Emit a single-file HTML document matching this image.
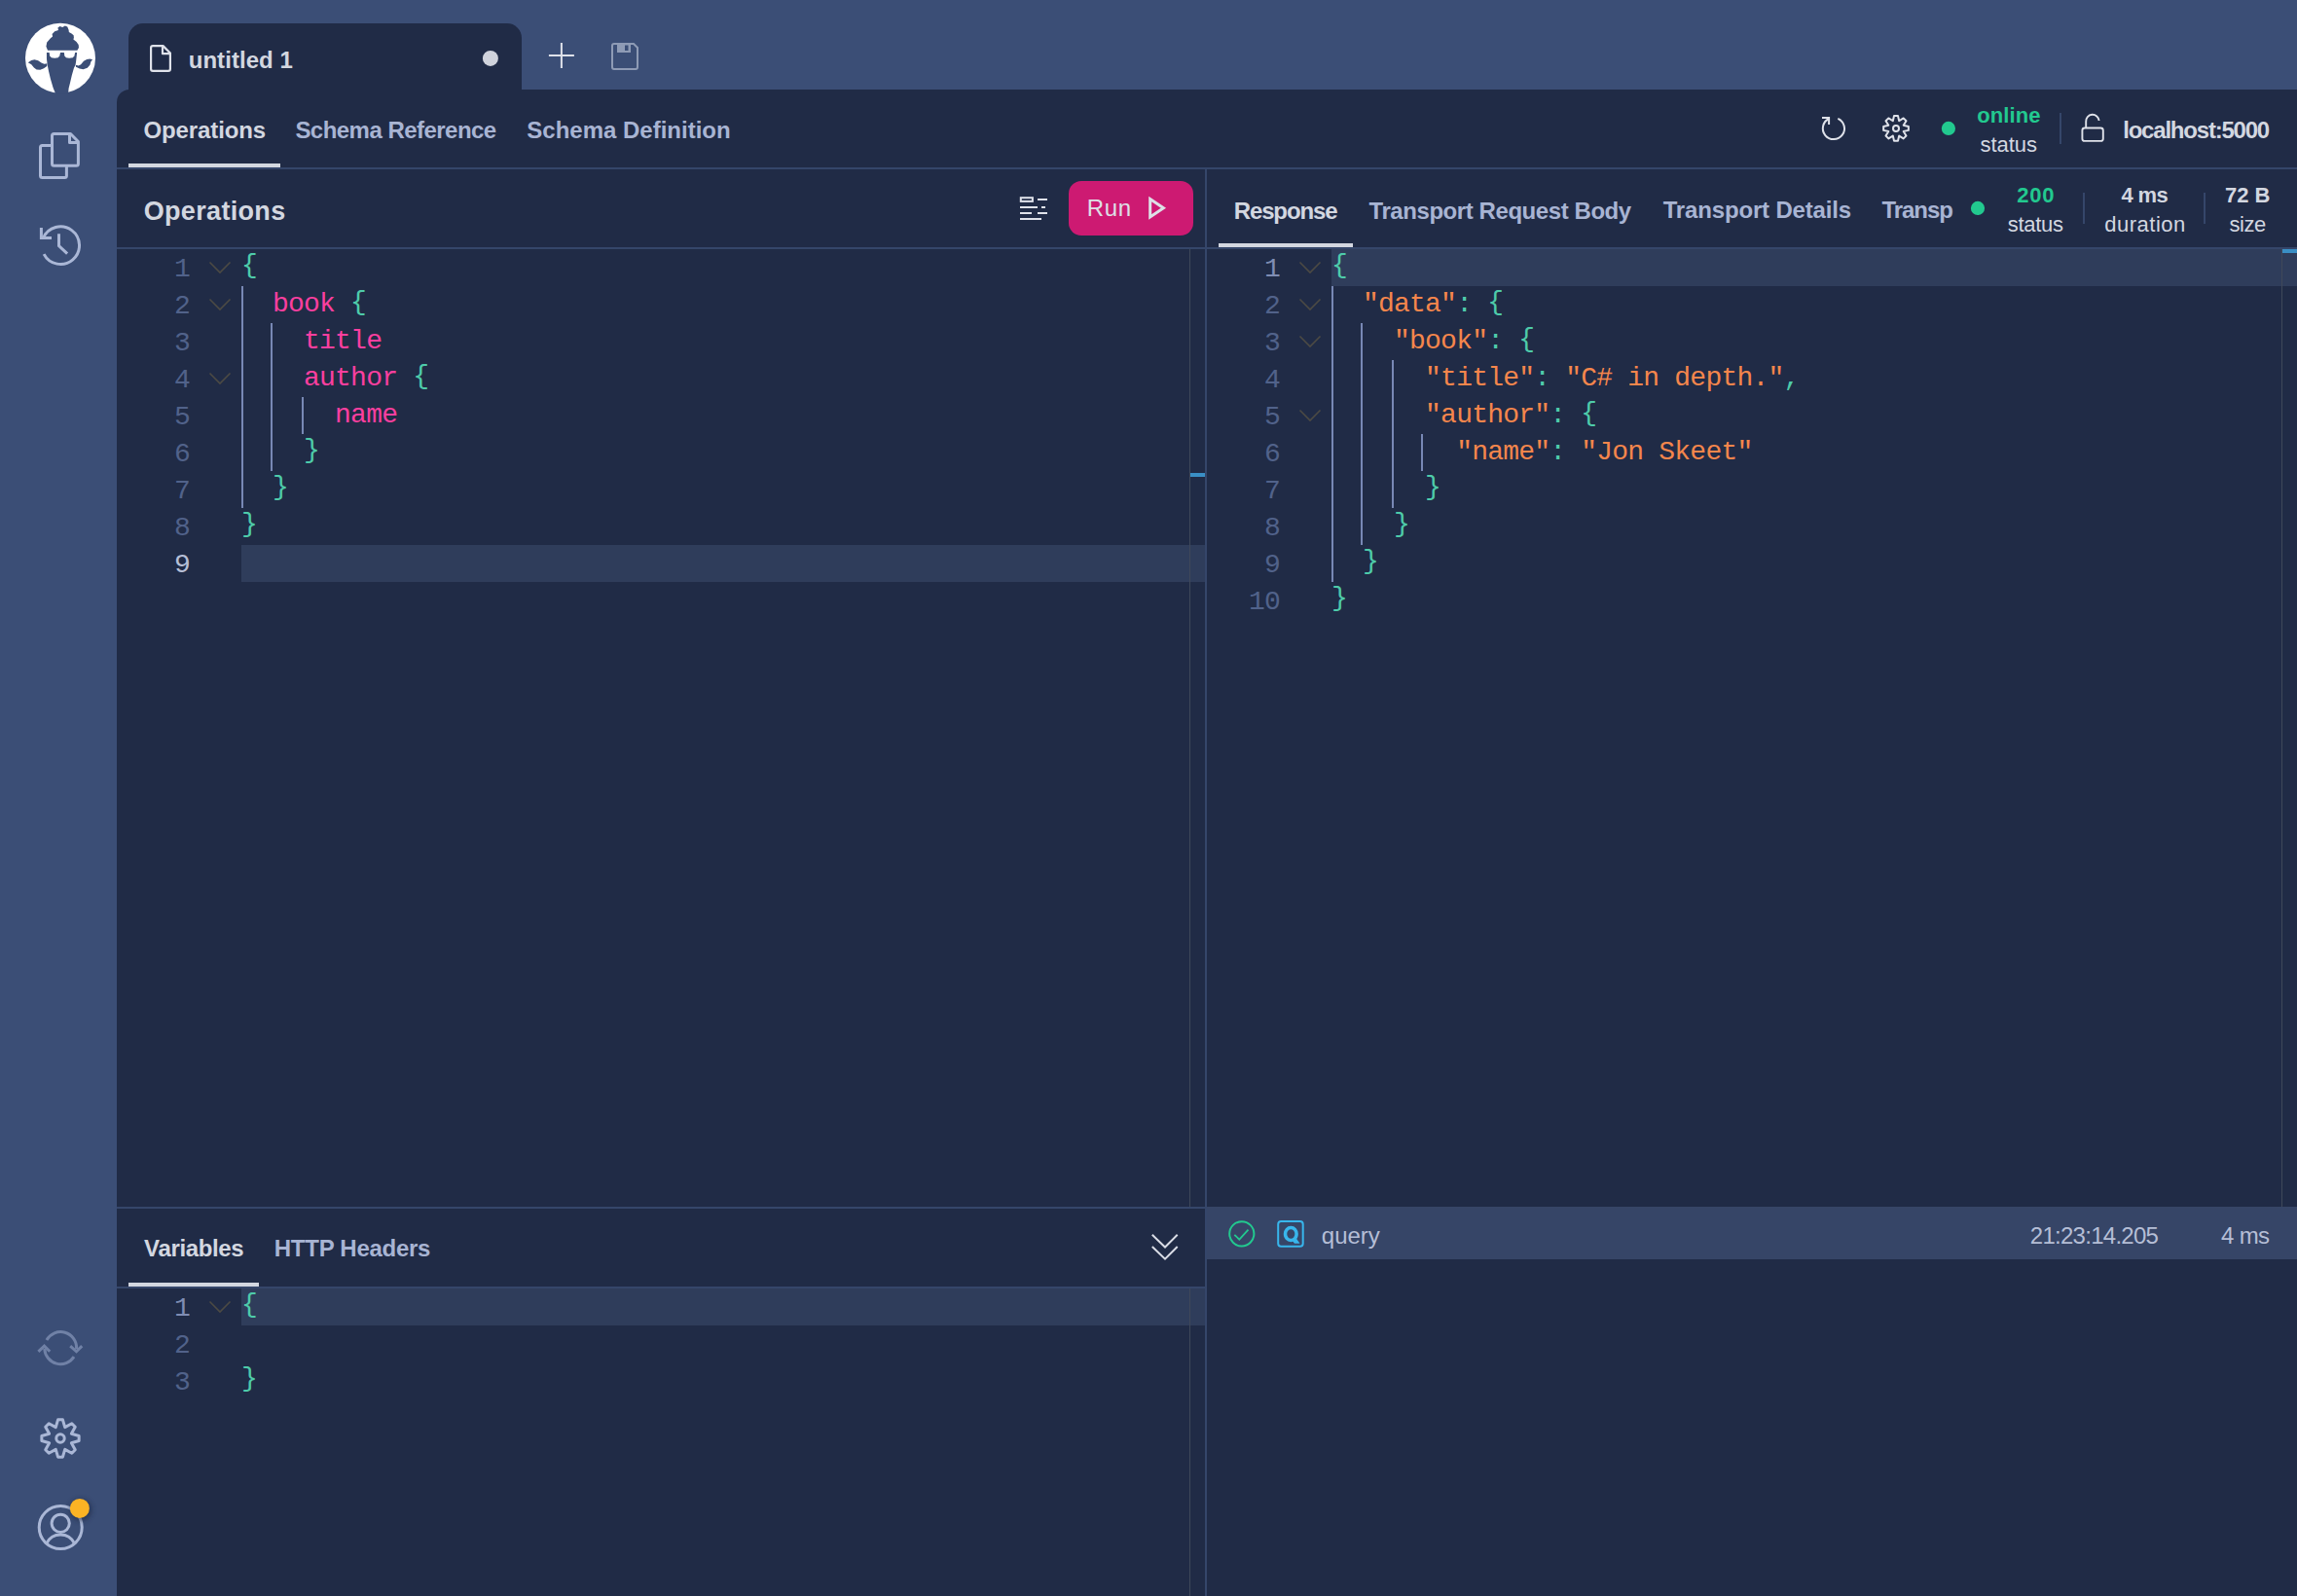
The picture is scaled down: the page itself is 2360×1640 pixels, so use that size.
<!DOCTYPE html><html><head><meta charset='utf-8'><style>
*{margin:0;padding:0;box-sizing:border-box}
html,body{width:2360px;height:1640px;overflow:hidden;background:#3b4e76}
body{position:relative;font-family:"Liberation Sans",sans-serif}
.t{position:absolute;white-space:pre;line-height:60px;font-family:"Liberation Sans",sans-serif}
.code{position:absolute;white-space:pre;font-family:"Liberation Mono",monospace;font-size:28px;letter-spacing:-0.8px;line-height:38px;height:38px}
.ln{position:absolute;width:200px;text-align:right;white-space:pre;font-family:"Liberation Mono",monospace;font-size:28px;letter-spacing:-0.8px;line-height:38px}
svg{position:absolute;overflow:visible}
.br{position:relative;top:-2px}
</style></head><body>
<div style='position:absolute;left:0px;top:0px;width:2360px;height:1640px;background:#3b4e76;'></div>
<div style='position:absolute;left:132px;top:24px;width:404px;height:80px;background:#202b46;border-radius:15px 15px 0 0'></div>
<div style='position:absolute;left:120px;top:92px;width:2240px;height:1548px;background:#202b46;border-top-left-radius:13px'></div>
<div style='position:absolute;left:120px;top:172px;width:2240px;height:2px;background:#35466a;'></div>
<div style='position:absolute;left:120px;top:254px;width:2240px;height:2px;background:#35466a;'></div>
<div style='position:absolute;left:1238px;top:174px;width:2px;height:1466px;background:#35466a;'></div>
<div style='position:absolute;left:120px;top:1240px;width:1118px;height:2px;background:#35466a;'></div>
<div style='position:absolute;left:120px;top:1322px;width:1118px;height:2px;background:#35466a;'></div>
<div style='position:absolute;left:132px;top:168px;width:156px;height:4px;background:#d3d7e0;'></div>
<div style='position:absolute;left:1252px;top:250px;width:138px;height:4px;background:#d3d7e0;'></div>
<div style='position:absolute;left:132px;top:1318px;width:134px;height:4px;background:#d3d7e0;'></div>
<div style='position:absolute;left:248px;top:560px;width:990px;height:38px;background:#2f3d5b;'></div>
<div style='position:absolute;left:1368px;top:256px;width:992px;height:38px;background:#2f3d5b;'></div>
<div style='position:absolute;left:248px;top:1324px;width:990px;height:38px;background:#2f3d5b;'></div>
<div style='position:absolute;left:1240px;top:1240px;width:1120px;height:54px;background:#364567;'></div>
<div style='position:absolute;left:1222px;top:256px;width:1px;height:984px;background:#3f4859;'></div>
<div style='position:absolute;left:1222px;top:1324px;width:1px;height:316px;background:#3f4859;'></div>
<div style='position:absolute;left:2344px;top:256px;width:1px;height:984px;background:#3f4859;'></div>
<div style='position:absolute;left:1223px;top:486px;width:15px;height:4px;background:#3a8fc5;'></div>
<div style='position:absolute;left:2345px;top:256px;width:15px;height:4px;background:#3a8fc5;'></div>
<div style='position:absolute;left:2116px;top:116px;width:2px;height:32px;background:#35466a;'></div>
<div style='position:absolute;left:2140px;top:198px;width:2px;height:32px;background:#35466a;'></div>
<div style='position:absolute;left:2264px;top:198px;width:2px;height:32px;background:#35466a;'></div>
<div style='position:absolute;left:1098px;top:186px;width:128px;height:56px;background:#cd1a72;border-radius:13px'></div>
<div style='position:absolute;left:248px;top:294px;width:2px;height:228px;background:#7888b5;'></div>
<div style='position:absolute;left:278px;top:332px;width:2px;height:152px;background:#7888b5;'></div>
<div style='position:absolute;left:310px;top:408px;width:2px;height:38px;background:#7888b5;'></div>
<div style='position:absolute;left:1368px;top:294px;width:2px;height:304px;background:#7888b5;'></div>
<div style='position:absolute;left:1398px;top:332px;width:2px;height:228px;background:#7888b5;'></div>
<div style='position:absolute;left:1430px;top:370px;width:2px;height:152px;background:#7888b5;'></div>
<div style='position:absolute;left:1460px;top:446px;width:2px;height:38px;background:#7888b5;'></div>
<div class=ln style='left:-5px;top:258px;color:#51628a'>1</div>
<svg style='position:absolute;left:214px;top:265px' width=24 height=16><path d='M1.5 4.5 L12 15 L22.5 4.5' fill='none' stroke='#4c4a44' stroke-width=1.6 /></svg>
<div class=code style='left:248px;top:256px'><span class=br style='color:#4ecbaa'>{</span></div>
<div class=ln style='left:-5px;top:296px;color:#51628a'>2</div>
<svg style='position:absolute;left:214px;top:303px' width=24 height=16><path d='M1.5 4.5 L12 15 L22.5 4.5' fill='none' stroke='#4c4a44' stroke-width=1.6 /></svg>
<div class=code style='left:248px;top:294px'><span style='color:#4ecbaa'> </span><span style='color:#4ecbaa'> </span><span style='color:#fb3f9f'>b</span><span style='color:#fb3f9f'>o</span><span style='color:#fb3f9f'>o</span><span style='color:#fb3f9f'>k</span><span style='color:#4ecbaa'> </span><span class=br style='color:#4ecbaa'>{</span></div>
<div class=ln style='left:-5px;top:334px;color:#51628a'>3</div>
<div class=code style='left:248px;top:332px'><span style='color:#4ecbaa'> </span><span style='color:#4ecbaa'> </span><span style='color:#4ecbaa'> </span><span style='color:#4ecbaa'> </span><span style='color:#fb3f9f'>t</span><span style='color:#fb3f9f'>i</span><span style='color:#fb3f9f'>t</span><span style='color:#fb3f9f'>l</span><span style='color:#fb3f9f'>e</span></div>
<div class=ln style='left:-5px;top:372px;color:#51628a'>4</div>
<svg style='position:absolute;left:214px;top:379px' width=24 height=16><path d='M1.5 4.5 L12 15 L22.5 4.5' fill='none' stroke='#4c4a44' stroke-width=1.6 /></svg>
<div class=code style='left:248px;top:370px'><span style='color:#4ecbaa'> </span><span style='color:#4ecbaa'> </span><span style='color:#4ecbaa'> </span><span style='color:#4ecbaa'> </span><span style='color:#fb3f9f'>a</span><span style='color:#fb3f9f'>u</span><span style='color:#fb3f9f'>t</span><span style='color:#fb3f9f'>h</span><span style='color:#fb3f9f'>o</span><span style='color:#fb3f9f'>r</span><span style='color:#4ecbaa'> </span><span class=br style='color:#4ecbaa'>{</span></div>
<div class=ln style='left:-5px;top:410px;color:#51628a'>5</div>
<div class=code style='left:248px;top:408px'><span style='color:#4ecbaa'> </span><span style='color:#4ecbaa'> </span><span style='color:#4ecbaa'> </span><span style='color:#4ecbaa'> </span><span style='color:#4ecbaa'> </span><span style='color:#4ecbaa'> </span><span style='color:#fb3f9f'>n</span><span style='color:#fb3f9f'>a</span><span style='color:#fb3f9f'>m</span><span style='color:#fb3f9f'>e</span></div>
<div class=ln style='left:-5px;top:448px;color:#51628a'>6</div>
<div class=code style='left:248px;top:446px'><span style='color:#4ecbaa'> </span><span style='color:#4ecbaa'> </span><span style='color:#4ecbaa'> </span><span style='color:#4ecbaa'> </span><span class=br style='color:#4ecbaa'>}</span></div>
<div class=ln style='left:-5px;top:486px;color:#51628a'>7</div>
<div class=code style='left:248px;top:484px'><span style='color:#4ecbaa'> </span><span style='color:#4ecbaa'> </span><span class=br style='color:#4ecbaa'>}</span></div>
<div class=ln style='left:-5px;top:524px;color:#51628a'>8</div>
<div class=code style='left:248px;top:522px'><span class=br style='color:#4ecbaa'>}</span></div>
<div class=ln style='left:-5px;top:562px;color:#b6bfd6'>9</div>
<div class=code style='left:248px;top:560px'></div>
<div class=ln style='left:1115px;top:258px;color:#7f8db3'>1</div>
<svg style='position:absolute;left:1334px;top:265px' width=24 height=16><path d='M1.5 4.5 L12 15 L22.5 4.5' fill='none' stroke='#4c4a44' stroke-width=1.6 /></svg>
<div class=code style='left:1368px;top:256px'><span class=br style='color:#4ecbaa'>{</span></div>
<div class=ln style='left:1115px;top:296px;color:#51628a'>2</div>
<svg style='position:absolute;left:1334px;top:303px' width=24 height=16><path d='M1.5 4.5 L12 15 L22.5 4.5' fill='none' stroke='#4c4a44' stroke-width=1.6 /></svg>
<div class=code style='left:1368px;top:294px'><span style='color:#4ecbaa'> </span><span style='color:#4ecbaa'> </span><span style='color:#f5864c'>&quot;</span><span style='color:#f5864c'>d</span><span style='color:#f5864c'>a</span><span style='color:#f5864c'>t</span><span style='color:#f5864c'>a</span><span style='color:#f5864c'>&quot;</span><span style='color:#4ecbaa'>:</span><span style='color:#4ecbaa'> </span><span class=br style='color:#4ecbaa'>{</span></div>
<div class=ln style='left:1115px;top:334px;color:#51628a'>3</div>
<svg style='position:absolute;left:1334px;top:341px' width=24 height=16><path d='M1.5 4.5 L12 15 L22.5 4.5' fill='none' stroke='#4c4a44' stroke-width=1.6 /></svg>
<div class=code style='left:1368px;top:332px'><span style='color:#4ecbaa'> </span><span style='color:#4ecbaa'> </span><span style='color:#4ecbaa'> </span><span style='color:#4ecbaa'> </span><span style='color:#f5864c'>&quot;</span><span style='color:#f5864c'>b</span><span style='color:#f5864c'>o</span><span style='color:#f5864c'>o</span><span style='color:#f5864c'>k</span><span style='color:#f5864c'>&quot;</span><span style='color:#4ecbaa'>:</span><span style='color:#4ecbaa'> </span><span class=br style='color:#4ecbaa'>{</span></div>
<div class=ln style='left:1115px;top:372px;color:#51628a'>4</div>
<div class=code style='left:1368px;top:370px'><span style='color:#4ecbaa'> </span><span style='color:#4ecbaa'> </span><span style='color:#4ecbaa'> </span><span style='color:#4ecbaa'> </span><span style='color:#4ecbaa'> </span><span style='color:#4ecbaa'> </span><span style='color:#f5864c'>&quot;</span><span style='color:#f5864c'>t</span><span style='color:#f5864c'>i</span><span style='color:#f5864c'>t</span><span style='color:#f5864c'>l</span><span style='color:#f5864c'>e</span><span style='color:#f5864c'>&quot;</span><span style='color:#4ecbaa'>:</span><span style='color:#4ecbaa'> </span><span style='color:#f5864c'>&quot;</span><span style='color:#f5864c'>C</span><span style='color:#f5864c'>#</span><span style='color:#f5864c'> </span><span style='color:#f5864c'>i</span><span style='color:#f5864c'>n</span><span style='color:#f5864c'> </span><span style='color:#f5864c'>d</span><span style='color:#f5864c'>e</span><span style='color:#f5864c'>p</span><span style='color:#f5864c'>t</span><span style='color:#f5864c'>h</span><span style='color:#f5864c'>.</span><span style='color:#f5864c'>&quot;</span><span style='color:#4ecbaa'>,</span></div>
<div class=ln style='left:1115px;top:410px;color:#51628a'>5</div>
<svg style='position:absolute;left:1334px;top:417px' width=24 height=16><path d='M1.5 4.5 L12 15 L22.5 4.5' fill='none' stroke='#4c4a44' stroke-width=1.6 /></svg>
<div class=code style='left:1368px;top:408px'><span style='color:#4ecbaa'> </span><span style='color:#4ecbaa'> </span><span style='color:#4ecbaa'> </span><span style='color:#4ecbaa'> </span><span style='color:#4ecbaa'> </span><span style='color:#4ecbaa'> </span><span style='color:#f5864c'>&quot;</span><span style='color:#f5864c'>a</span><span style='color:#f5864c'>u</span><span style='color:#f5864c'>t</span><span style='color:#f5864c'>h</span><span style='color:#f5864c'>o</span><span style='color:#f5864c'>r</span><span style='color:#f5864c'>&quot;</span><span style='color:#4ecbaa'>:</span><span style='color:#4ecbaa'> </span><span class=br style='color:#4ecbaa'>{</span></div>
<div class=ln style='left:1115px;top:448px;color:#51628a'>6</div>
<div class=code style='left:1368px;top:446px'><span style='color:#4ecbaa'> </span><span style='color:#4ecbaa'> </span><span style='color:#4ecbaa'> </span><span style='color:#4ecbaa'> </span><span style='color:#4ecbaa'> </span><span style='color:#4ecbaa'> </span><span style='color:#4ecbaa'> </span><span style='color:#4ecbaa'> </span><span style='color:#f5864c'>&quot;</span><span style='color:#f5864c'>n</span><span style='color:#f5864c'>a</span><span style='color:#f5864c'>m</span><span style='color:#f5864c'>e</span><span style='color:#f5864c'>&quot;</span><span style='color:#4ecbaa'>:</span><span style='color:#4ecbaa'> </span><span style='color:#f5864c'>&quot;</span><span style='color:#f5864c'>J</span><span style='color:#f5864c'>o</span><span style='color:#f5864c'>n</span><span style='color:#f5864c'> </span><span style='color:#f5864c'>S</span><span style='color:#f5864c'>k</span><span style='color:#f5864c'>e</span><span style='color:#f5864c'>e</span><span style='color:#f5864c'>t</span><span style='color:#f5864c'>&quot;</span></div>
<div class=ln style='left:1115px;top:486px;color:#51628a'>7</div>
<div class=code style='left:1368px;top:484px'><span style='color:#4ecbaa'> </span><span style='color:#4ecbaa'> </span><span style='color:#4ecbaa'> </span><span style='color:#4ecbaa'> </span><span style='color:#4ecbaa'> </span><span style='color:#4ecbaa'> </span><span class=br style='color:#4ecbaa'>}</span></div>
<div class=ln style='left:1115px;top:524px;color:#51628a'>8</div>
<div class=code style='left:1368px;top:522px'><span style='color:#4ecbaa'> </span><span style='color:#4ecbaa'> </span><span style='color:#4ecbaa'> </span><span style='color:#4ecbaa'> </span><span class=br style='color:#4ecbaa'>}</span></div>
<div class=ln style='left:1115px;top:562px;color:#51628a'>9</div>
<div class=code style='left:1368px;top:560px'><span style='color:#4ecbaa'> </span><span style='color:#4ecbaa'> </span><span class=br style='color:#4ecbaa'>}</span></div>
<div class=ln style='left:1115px;top:600px;color:#51628a'>10</div>
<div class=code style='left:1368px;top:598px'><span class=br style='color:#4ecbaa'>}</span></div>
<div class=ln style='left:-5px;top:1326px;color:#7f8db3'>1</div>
<svg style='position:absolute;left:214px;top:1333px' width=24 height=16><path d='M1.5 4.5 L12 15 L22.5 4.5' fill='none' stroke='#4c4a44' stroke-width=1.6 /></svg>
<div class=code style='left:248px;top:1324px'><span class=br style='color:#4ecbaa'>{</span></div>
<div class=ln style='left:-5px;top:1364px;color:#51628a'>2</div>
<div class=code style='left:248px;top:1362px'></div>
<div class=ln style='left:-5px;top:1402px;color:#51628a'>3</div>
<div class=code style='left:248px;top:1400px'><span class=br style='color:#4ecbaa'>}</span></div>
<div class=t style='left:193.7px;top:31.8px;font-weight:bold;font-size:24px;letter-spacing:0.056px;color:#d3d7e0'>untitled 1</div>
<div class=t style='left:147.5px;top:104.0px;font-weight:bold;font-size:24px;letter-spacing:-0.111px;color:#d3d7e0'>Operations</div>
<div class=t style='left:303.4px;top:104.0px;font-weight:bold;font-size:24px;letter-spacing:-0.533px;color:#a8b4d3'>Schema Reference</div>
<div class=t style='left:541.3px;top:104.0px;font-weight:bold;font-size:24px;letter-spacing:0.0px;color:#a8b4d3'>Schema Definition</div>
<div class=t style='left:2031.2px;top:89.0px;font-weight:bold;font-size:22px;letter-spacing:0.12px;color:#22c98f'>online</div>
<div class=t style='left:2034.6px;top:119.0px;font-weight:normal;font-size:22px;letter-spacing:-0.08px;color:#d3d7e0'>status</div>
<div class=t style='left:2181.2px;top:104.1px;font-weight:bold;font-size:24px;letter-spacing:-1.208px;color:#d3d7e0'>localhost:5000</div>
<div class=t style='left:147.7px;top:186.9px;font-weight:bold;font-size:27px;letter-spacing:0.333px;color:#d3d7e0'>Operations</div>
<div class=t style='left:1116.8px;top:184.2px;font-weight:normal;font-size:24px;letter-spacing:0.6px;color:#dde0e6'>Run</div>
<div class=t style='left:1267.7px;top:186.6px;font-weight:bold;font-size:24px;letter-spacing:-1.114px;color:#d3d7e0'>Response</div>
<div class=t style='left:1406.5px;top:186.6px;font-weight:bold;font-size:24px;letter-spacing:-0.429px;color:#a8b4d3'>Transport Request Body</div>
<div class=t style='left:1708.7px;top:186.3px;font-weight:bold;font-size:24px;letter-spacing:-0.162px;color:#a8b4d3'>Transport Details</div>
<div class=t style='left:1933.4px;top:186.3px;font-weight:bold;font-size:24px;letter-spacing:-1.04px;color:#a8b4d3'>Transp</div>
<div class=t style='left:2072.3px;top:170.8px;font-weight:bold;font-size:22px;letter-spacing:0.7px;color:#22c98f'>200</div>
<div class=t style='left:2062.7px;top:200.5px;font-weight:normal;font-size:22px;letter-spacing:-0.3px;color:#d3d7e0'>status</div>
<div class=t style='left:2179.6px;top:170.8px;font-weight:bold;font-size:22px;letter-spacing:-0.667px;color:#d3d7e0'>4 ms</div>
<div class=t style='left:2162.3px;top:200.5px;font-weight:normal;font-size:22px;letter-spacing:0.5px;color:#d3d7e0'>duration</div>
<div class=t style='left:2285.9px;top:170.8px;font-weight:bold;font-size:22px;letter-spacing:0.0px;color:#d3d7e0'>72 B</div>
<div class=t style='left:2290.6px;top:200.5px;font-weight:normal;font-size:22px;letter-spacing:-0.5px;color:#d3d7e0'>size</div>
<div class=t style='left:148.1px;top:1253.4px;font-weight:bold;font-size:24px;letter-spacing:-0.35px;color:#d3d7e0'>Variables</div>
<div class=t style='left:281.8px;top:1253.4px;font-weight:bold;font-size:24px;letter-spacing:-0.273px;color:#a8b4d3'>HTTP Headers</div>
<div class=t style='left:1357.8px;top:1240.4px;font-weight:normal;font-size:24px;letter-spacing:0.0px;color:#b5bed6'>query</div>
<div class=t style='left:2085.8px;top:1240.1px;font-weight:normal;font-size:24px;letter-spacing:-0.727px;color:#b5bed6'>21:23:14.205</div>
<div class=t style='left:2282.0px;top:1240.1px;font-weight:normal;font-size:24px;letter-spacing:-0.667px;color:#b5bed6'>4 ms</div>
<svg width='2360' height='1640' viewBox='0 0 2360 1640' style='position:absolute;left:0;top:0'>
<circle cx='62' cy='59.7' r='36' fill='#ffffff'/>
<path d='M49.02 51.68 L47.42 47.69 L48.22 43.43 L51.95 39.17 L54.08 37.57 L53.55 34.91 L56.21 32.25 L59.94 30.92 L59.40 28.52 L61.53 26.92 L64.20 27.99 L66.86 26.39 L69.25 27.45 L70.59 30.65 L70.85 33.05 L73.51 34.38 L75.64 36.24 L75.91 38.64 L75.38 40.50 L78.57 42.90 L80.70 46.09 L80.97 49.02 L79.37 51.68 Z' fill='#3b4e76'/>
<path d='M47.96 54.08 L79.11 54.08 L78.04 63.66 L77.51 66.86 L75.91 70.05 L73.78 77.51 L71.92 85.50 L70.59 90.82 L70.05 96.68 L57.27 96.68 L54.61 90.29 L51.95 81.24 L49.82 72.18 L48.75 66.86 L47.96 60.47 Z' fill='#3b4e76'/>
<path d='M28.79 64.20 L32.25 62.07 L35.44 61.27 L39.17 62.33 L42.90 64.73 L45.56 65.69 L48.49 65.37 L48.22 67.92 L45.03 70.32 L41.30 71.76 L37.57 71.38 L34.91 69.52 L32.25 66.33 Z' fill='#3b4e76'/>
<path d='M77.77 66.86 L80.70 67.55 L83.10 66.33 L86.03 62.86 L89.22 61.11 L92.42 60.58 L95.08 61.27 L93.48 63.13 L92.42 66.86 L89.76 69.79 L85.50 71.22 L81.77 70.59 L78.04 68.72 Z' fill='#3b4e76'/>
<path d='M50.62 53.65 L62.07 53.65 L61.27 57.27 L59.67 59.30 L56.21 59.83 L52.75 59.14 L51.15 57.27 Z' fill='#ffffff'/>
<path d='M65.79 53.65 L77.24 53.65 L76.44 57.27 L74.85 59.30 L71.12 59.83 L67.92 59.14 L66.33 57.27 Z' fill='#ffffff'/>
<path d='M53.5 139.5 Q53.5 137.5 55.5 137.5 H72.5 L80.4 145.5 V168.3 Q80.4 170.3 78.4 170.3 H55.5 Q53.5 170.3 53.5 168.3 Z M71.5 138 V146.5 H80' fill='none' stroke='#aab7d6' stroke-width='3' stroke-linejoin='round'/>
<path d='M53.5 149.5 H43.5 Q41.5 149.5 41.5 151.5 V180.4 Q41.5 182.4 43.5 182.4 H66.4 Q68.4 182.4 68.4 180.4 V170.3' fill='none' stroke='#aab7d6' stroke-width='3' stroke-linejoin='round'/>
<path d='M44.5 244.5 A19.3 19.3 0 1 1 45.1 261.1' fill='none' stroke='#aab7d6' stroke-width='3'/>
<path d='M42.4 234 V244.6 H53' fill='none' stroke='#aab7d6' stroke-width='3'/>
<path d='M60.5 240.2 V252.6 L69.1 260.7' fill='none' stroke='#aab7d6' stroke-width='3'/>
<path d='M47.9 1377 A16.4 16.4 0 0 1 78.6 1386' fill='none' stroke='#7081a6' stroke-width='3'/>
<path d='M72.2 1383.1 L78.5 1388.8 L84.2 1383.1' fill='none' stroke='#7081a6' stroke-width='3'/>
<path d='M76 1394.1 A16.4 16.4 0 0 1 45.8 1386' fill='none' stroke='#7081a6' stroke-width='3'/>
<path d='M39.4 1388.8 L45.5 1383.1 L51.2 1388.8' fill='none' stroke='#7081a6' stroke-width='3'/>
<path d='M57.29 1466.64 L59.55 1458.86 L64.45 1458.86 L66.71 1466.64 L66.71 1466.64 L73.80 1462.73 L77.27 1466.20 L73.36 1473.29 L73.36 1473.29 L81.14 1475.55 L81.14 1480.45 L73.36 1482.71 L73.36 1482.71 L77.27 1489.80 L73.80 1493.27 L66.71 1489.36 L66.71 1489.36 L64.45 1497.14 L59.55 1497.14 L57.29 1489.36 L57.29 1489.36 L50.20 1493.27 L46.73 1489.80 L50.64 1482.71 L50.64 1482.71 L42.86 1480.45 L42.86 1475.55 L50.64 1473.29 L50.64 1473.29 L46.73 1466.20 L50.20 1462.73 L57.29 1466.64 Z' fill='none' stroke='#aab7d6' stroke-width='3' stroke-linejoin='round'/>
<circle cx='62' cy='1478' r='4.2' fill='none' stroke='#aab7d6' stroke-width='3' stroke-linejoin='round'/>
<circle cx='62.2' cy='1569.6' r='22' fill='none' stroke='#aab7d6' stroke-width='3' stroke-linejoin='round'/>
<circle cx='62.2' cy='1565.3' r='9.1' fill='none' stroke='#aab7d6' stroke-width='3' stroke-linejoin='round'/>
<path d='M47.9 1585.9 A15.85 15.85 0 0 1 76.4 1585.9' fill='none' stroke='#aab7d6' stroke-width='3' stroke-linejoin='round'/>
<defs><filter id='sh' x='-50%' y='-50%' width='200%' height='200%'><feGaussianBlur stdDeviation='2.5'/></filter></defs>
<circle cx='83' cy='1551.5' r='11.5' fill='#1d2740' opacity='0.55' filter='url(#sh)'/>
<circle cx='81.9' cy='1549.9' r='10' fill='#fbb324'/>
<path d='M157 47.1 H167.5 L174.9 54.5 V71 Q174.9 72.9 173 72.9 H157 Q155.1 72.9 155.1 71 V49 Q155.1 47.1 157 47.1 Z M167 47.5 V55.2 H174.5' fill='none' stroke='#dfe2ea' stroke-width='2.2' stroke-linejoin='round'/>
<circle cx='503.9' cy='59.9' r='8' fill='#d0d3dc'/>
<path d='M563.9 57 H589.9 M576.9 44 V70' fill='none' stroke='#dfe2ea' stroke-width='2'/>
<path d='M631 45 H651 L655 49 V69 Q655 71 653 71 H631 Q629 71 629 69 V47 Q629 45 631 45 Z' fill='none' stroke='#8e9bb5' stroke-width='2'/>
<path d='M634 45 H648 V54 H634 Z' fill='#8e9bb5'/>
<rect x='642' y='46.5' width='3.5' height='5.5' fill='#3b4e76'/>
<path d='M1879.1 122 A11.1 11.1 0 1 0 1888.3 121.8' fill='none' stroke='#dfe2ea' stroke-width='2'/>
<path d='M1872 120.9 H1879.1 V128' fill='none' stroke='#dfe2ea' stroke-width='2'/>
<path d='M1944.82 124.23 L1946.01 119.05 L1949.99 119.05 L1951.18 124.23 L1951.18 124.23 L1955.68 121.41 L1958.49 124.22 L1955.67 128.72 L1955.67 128.72 L1960.85 129.91 L1960.85 133.89 L1955.67 135.08 L1955.67 135.08 L1958.49 139.58 L1955.68 142.39 L1951.18 139.57 L1951.18 139.57 L1949.99 144.75 L1946.01 144.75 L1944.82 139.57 L1944.82 139.57 L1940.32 142.39 L1937.51 139.58 L1940.33 135.08 L1940.33 135.08 L1935.15 133.89 L1935.15 129.91 L1940.33 128.72 L1940.33 128.72 L1937.51 124.22 L1940.32 121.41 L1944.82 124.23 Z' fill='none' stroke='#dfe2ea' stroke-width='2' stroke-linejoin='round'/>
<circle cx='1948' cy='131.9' r='3' fill='none' stroke='#dfe2ea' stroke-width='2'/>
<circle cx='2001.9' cy='131.9' r='7.1' fill='#22c98f'/>
<circle cx='2032' cy='213.9' r='7.1' fill='#22c98f'/>
<rect x='2139.4' y='131.5' width='21.4' height='13.4' rx='2.5' fill='none' stroke='#dfe2ea' stroke-width='1.9'/>
<path d='M2143.2 131.5 V125 A6.7 6.7 0 0 1 2156.6 124' fill='none' stroke='#dfe2ea' stroke-width='1.9'/>
<rect x='1048.8' y='203.2' width='12.1' height='3.7' fill='none' stroke='#dfe2ea' stroke-width='2'/>
<path d='M1066 205 H1076 M1048 213 H1066 M1070 213 H1074 M1048 219 H1060 M1066 219 H1076 M1048 225 H1070' fill='none' stroke='#dfe2ea' stroke-width='2'/>
<path d='M1181.7 204.5 L1195.4 213.75 L1181.7 223 Z' fill='none' stroke='#dde0e6' stroke-width='3' stroke-linejoin='miter'/>
<path d='M1183.8 1268.8 L1197 1281.5 L1209.7 1268.8 M1183.8 1281 L1197 1293.7 L1209.7 1281' fill='none' stroke='#dadde6' stroke-width='2'/>
<circle cx='1275.8' cy='1267.8' r='12.6' fill='none' stroke='#22c98f' stroke-width='2'/>
<path d='M1268.3 1268.8 L1273.3 1273.6 L1282.5 1263.7' fill='none' stroke='#22c98f' stroke-width='1.8'/>
<rect x='1313.2' y='1255.1' width='25.5' height='25.6' rx='3' fill='none' stroke='#38b6ec' stroke-width='2'/>
<ellipse cx='1326.3' cy='1268' rx='5.8' ry='6.5' fill='none' stroke='#38b6ec' stroke-width='3.5'/>
<path d='M1327 1274 L1332.2 1273 L1335.5 1277.8 L1330 1277.8 Z' fill='#38b6ec'/>
</svg>
</body></html>
